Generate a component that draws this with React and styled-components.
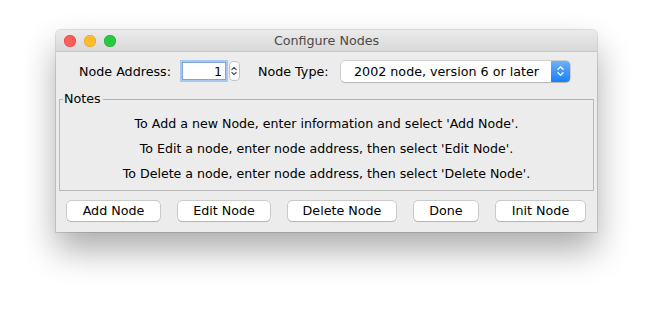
import React from "react";
import styled, { createGlobalStyle } from "styled-components";

const Global = createGlobalStyle`
  html, body { margin: 0; padding: 0; background: #ffffff; }
  body { font-family: "DejaVu Sans", "Noto Sans", sans-serif; font-size: 12.7px; color: #000; }
`;

const Stage = styled.div`
  width: 653px;
  height: 312px;
  padding: 30px 0 0 56px;
  box-sizing: border-box;
`;

const Win = styled.div`
  width: 541px;
  height: 202px;
  background: #ececec;
  border-radius: 5px 5px 0 0;
  box-shadow: 0 0 0 1px rgba(0,0,0,0.12), 0 18px 34px rgba(0,0,0,0.33);
  display: flex;
  flex-direction: column;
  overflow: hidden;
`;

const TitleBar = styled.div`
  height: 22px;
  flex: none;
  display: flex;
  align-items: center;
  position: relative;
  background: linear-gradient(#ebebeb, #d9d9d9);
  border-bottom: 1px solid #c6c6c6;
  box-sizing: border-box;
`;

const Lights = styled.div`
  display: flex;
  gap: 8px;
  padding-left: 8px;
`;

const Light = styled.span`
  width: 12px;
  height: 12px;
  border-radius: 50%;
  background: ${(p) => p.$c};
  box-shadow: inset 0 0 0 0.5px ${(p) => p.$b};
`;

const Title = styled.div`
  position: absolute;
  left: 0;
  right: 0;
  text-align: center;
  font-size: 12.7px;
  color: #4a4a4a;
`;

const Body = styled.div`
  display: flex;
  flex-direction: column;
  padding: 8px 3px 0 3px;
`;

const TopRow = styled.div`
  display: flex;
  align-items: center;
  height: 22px;
  padding-left: 20px;
`;

const Label = styled.span`
  font-size: 12.7px;
  flex: none;
  margin-right: ${(p) => p.$mr}px;
`;

const Field = styled.div`
  width: 44px;
  height: 18px;
  flex: none;
  background: #fff;
  border: 1px solid #7ea6dc;
  box-shadow: 0 0 0 2px #a9c8f0;
  box-sizing: border-box;
  text-align: right;
  padding-right: 3px;
  font-size: 12.7px;
  line-height: 17px;
  margin-left: 1px;
`;

const Spinner = styled.div`
  width: 11px;
  height: 20px;
  flex: none;
  margin-left: 3px;
  margin-right: 18px;
  background: #fff;
  border: 1px solid #c4c4c4;
  border-radius: 4px;
  box-sizing: border-box;
  display: flex;
  align-items: center;
  justify-content: center;
`;

const Select = styled.div`
  width: 229px;
  height: 21px;
  flex: none;
  margin-left: auto;
  margin-right: 24px;
  display: flex;
  background: #fff;
  border-radius: 4px;
  box-shadow: 0 0 0 0.5px rgba(0,0,0,0.25), 0 1px 1px rgba(0,0,0,0.12);
  overflow: hidden;
`;

const SelectText = styled.div`
  flex: 1;
  padding-left: 13px;
  font-size: 12.7px;
  line-height: 21px;
`;

const SelectArrow = styled.div`
  width: 19px;
  background: linear-gradient(#6ab2fb, #1a7ff9);
  display: flex;
  align-items: center;
  justify-content: center;
`;

const Group = styled.fieldset`
  margin: 10px 0 0 0;
  padding: 5px 0 0 0;
  border: 1px solid #b9b9b9;
  border-top-color: #b0b0b0;
  height: 99px;
  box-sizing: border-box;
  min-width: 0;
  display: flex;
  flex-direction: column;
  align-items: center;
`;

const Legend = styled.legend`
  padding: 0 2px 0 1px;
  margin-left: 3px;
  font-size: 12.7px;
  line-height: 14px;
`;

const NoteLine = styled.div`
  font-size: 12.6px;
  height: 25px;
  line-height: 25px;
  white-space: nowrap;
`;

const Buttons = styled.div`
  display: flex;
  gap: 18px;
  margin-top: 10px;
  padding-left: 8px;
`;

const Btn = styled.button`
  width: ${(p) => p.$w}px;
  flex: none;
  height: 20px;
  background: #fff;
  border: none;
  border-radius: 4px;
  box-shadow: 0 0 0 0.5px rgba(0,0,0,0.28), 0 1px 1px rgba(0,0,0,0.12);
  font-family: inherit;
  font-size: 12.7px;
  color: #000;
  padding: 0;
  line-height: 20px;
`;

const Chevrons = ({ color, w = 7 }) => (
  <svg width={w} height="12" viewBox="0 0 7 12" fill="none" stroke={color} strokeWidth="1.3" strokeLinecap="round" strokeLinejoin="round">
    <path d="M1 4.3 L3.5 1.8 L6 4.3" />
    <path d="M1 7.7 L3.5 10.2 L6 7.7" />
  </svg>
);

const notes = [
  "To Add a new Node, enter information and select 'Add Node'.",
  "To Edit a node, enter node address, then select 'Edit Node'.",
  "To Delete a node, enter node address, then select 'Delete Node'.",
];

const buttons = [
  ["Add Node", 93],
  ["Edit Node", 92],
  ["Delete Node", 108],
  ["Done", 64],
  ["Init Node", 89],
];

export default function App() {
  return (
    <>
      <Global />
      <Stage>
        <Win>
          <TitleBar>
            <Lights>
              <Light $c="#fc5f57" $b="#e0443e" />
              <Light $c="#fdbc2e" $b="#dea123" />
              <Light $c="#28c840" $b="#1aab29" />
            </Lights>
            <Title>Configure Nodes</Title>
          </TitleBar>
          <Body>
            <TopRow>
              <Label $mr={10}>Node Address:</Label>
              <Field>1</Field>
              <Spinner>
                <Chevrons color="#444" w={6} />
              </Spinner>
              <Label $mr={0}>Node Type:</Label>
              <Select>
                <SelectText>2002 node, version 6 or later</SelectText>
                <SelectArrow>
                  <Chevrons color="#fff" />
                </SelectArrow>
              </Select>
            </TopRow>
            <Group>
              <Legend>Notes</Legend>
              {notes.map((n) => (
                <NoteLine key={n}>{n}</NoteLine>
              ))}
            </Group>
            <Buttons>
              {buttons.map(([t, w]) => (
                <Btn key={t} $w={w}>{t}</Btn>
              ))}
            </Buttons>
          </Body>
        </Win>
      </Stage>
    </>
  );
}
